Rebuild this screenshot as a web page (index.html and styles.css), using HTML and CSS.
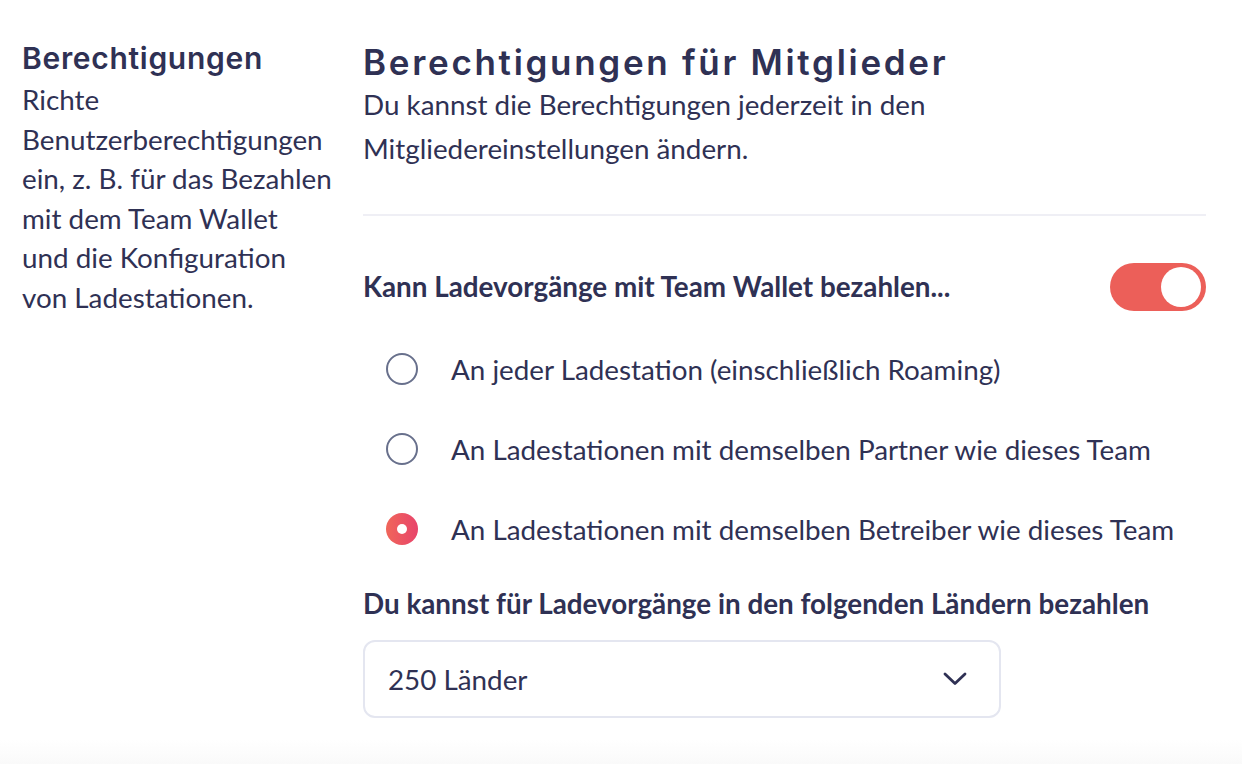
FILE: index.html
```html
<!DOCTYPE html>
<html lang="de">
<head>
<meta charset="utf-8">
<title>Berechtigungen</title>
<link rel="stylesheet" href="styles.css">
</head>
<body>
<div class="page">
  <aside class="side">
    <h2 class="side-title">Berechtigungen</h2>
    <p class="side-text">Richte<br>Benutzerberechtigungen<br>ein, z. B. für das Bezahlen<br>mit dem Team Wallet<br>und die Konfiguration<br>von Ladestationen.</p>
  </aside>
  <main class="main">
    <h1 class="main-title">Berechtigungen für Mitglieder</h1>
    <p class="main-sub">Du kannst die Berechtigungen jederzeit in den<br>Mitgliedereinstellungen ändern.</p>
    <hr class="divider">
    <div class="toggle-row">
      <span class="strong-label">Kann Ladevorgänge mit Team Wallet bezahlen...</span>
      <span class="toggle"><span class="knob"></span></span>
    </div>
    <div class="radios">
      <label class="radio"><span class="dot"></span><span>An jeder Ladestation (einschließlich Roaming)</span></label>
      <label class="radio"><span class="dot"></span><span>An Ladestationen mit demselben Partner wie dieses Team</span></label>
      <label class="radio"><span class="dot checked"></span><span>An Ladestationen mit demselben Betreiber wie dieses Team</span></label>
    </div>
    <div class="strong-label countries-label">Du kannst für Ladevorgänge in den folgenden Ländern bezahlen</div>
    <div class="select">
      <span>250 Länder</span>
      <svg class="chev" width="24" height="14" viewBox="0 0 24 14"><path d="M2 2 L12 11.5 L22 2" fill="none" stroke="#2f3154" stroke-width="2.8" stroke-linecap="round" stroke-linejoin="round"/></svg>
    </div>
  </main>
</div>
<div class="footer"></div>
</body>
</html>
```
FILE: styles.css
```css
html, body {
  margin: 0;
  padding: 0;
  background: #ffffff;
}
body {
  font-family: Lato, "Noto Sans", sans-serif;
  color: #2f3154;
  font-size: 27.8px;
}
.page {
  display: grid;
  grid-template-columns: 320px 1fr;
  column-gap: 21px;
  padding: 40px 36px 0 22px;
}
.side-title {
  margin: 0;
  font-family: Inter, "Noto Sans", sans-serif;
  font-weight: 600;
  font-size: 30px;
  line-height: 36px;
  letter-spacing: 0.7px;
}
.side-text {
  margin: 4px 0 0;
  line-height: 39.6px;
  white-space: nowrap;
}
.main-title {
  margin: 0;
  font-family: Inter, "Noto Sans", sans-serif;
  font-weight: 600;
  font-size: 35px;
  line-height: 44px;
  letter-spacing: 2.7px;
  white-space: nowrap;
}
.main-sub {
  margin: -1px 0 0;
  line-height: 44px;
}
.divider {
  margin: 43px 0 0;
  border: 0;
  height: 2px;
  background: #efeff5;
}
.toggle-row {
  margin-top: 47px;
  display: flex;
  align-items: center;
  justify-content: space-between;
}
.strong-label {
  font-weight: 700;
  line-height: 30px;
}
.toggle {
  width: 96px;
  height: 48px;
  border-radius: 24px;
  background: #ec5f59;
  display: flex;
  align-items: center;
  justify-content: flex-end;
  padding-right: 5px;
  box-sizing: border-box;
}
.knob {
  width: 40px;
  height: 40px;
  border-radius: 50%;
  background: #ffffff;
}
.radios {
  margin-top: 34px;
  padding-left: 23px;
  display: flex;
  flex-direction: column;
  gap: 32px;
}
.radio {
  display: flex;
  align-items: center;
  gap: 33px;
  height: 48px;
}
.dot {
  width: 32px;
  height: 32px;
  border-radius: 50%;
  border: 2px solid #68708c;
  box-sizing: border-box;
  flex: none;
}
.dot.checked {
  border: 0;
  background: linear-gradient(90deg, #f0665a, #e8446b);
  display: flex;
  align-items: center;
  justify-content: center;
}
.dot.checked::after {
  content: "";
  width: 10px;
  height: 10px;
  border-radius: 50%;
  background: #fff;
}
.countries-label {
  margin-top: 36px;
}
.select {
  margin-top: 21px;
  width: 638px;
  height: 78px;
  box-sizing: border-box;
  border: 2px solid #e4e6f0;
  border-radius: 12px;
  display: flex;
  align-items: center;
  justify-content: space-between;
  padding: 0 32px 0 23px;
}
.chev {
  display: block;
}
.footer {
  margin-top: 22px;
  height: 30px;
  background: linear-gradient(#ffffff, #f8f8f8);
}
```
